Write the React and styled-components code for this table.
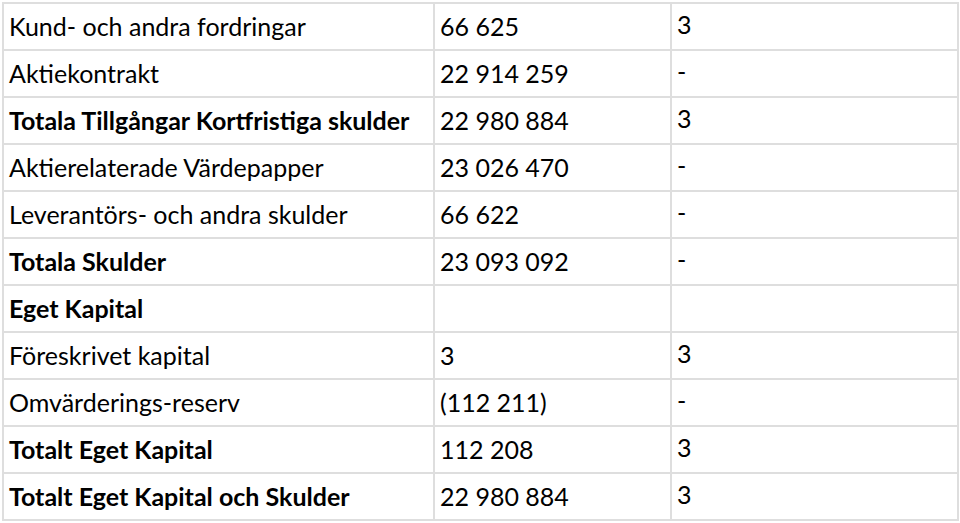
import React from 'react'
import styled, { createGlobalStyle } from 'styled-components'

const GlobalStyle = createGlobalStyle`
  body {
    margin: 0;
    background: #fff;
    font-family: Lato, "Open Sans", sans-serif;
    color: #000;
  }
`

const rows = [
  { label: 'Kund- och andra fordringar', value: '66 625', note: '3' },
  { label: 'Aktiekontrakt', value: '22 914 259', note: '-' },
  { label: 'Totala Tillgångar Kortfristiga skulder', value: '22 980 884', note: '3', bold: true },
  { label: 'Aktierelaterade Värdepapper', value: '23 026 470', note: '-' },
  { label: 'Leverantörs- och andra skulder', value: '66 622', note: '-' },
  { label: 'Totala Skulder', value: '23 093 092', note: '-', bold: true },
  { label: 'Eget Kapital', value: '', note: '', bold: true },
  { label: 'Föreskrivet kapital', value: '3', note: '3' },
  { label: 'Omvärderings-reserv', value: '(112 211)', note: '-' },
  { label: 'Totalt Eget Kapital', value: '112 208', note: '3', bold: true },
  { label: 'Totalt Eget Kapital och Skulder', value: '22 980 884', note: '3', bold: true },
]

export default function App() {
  return (
    <Page>
      <GlobalStyle />
      <Table>
        <colgroup>
          <col style={{ width: 431 }} />
          <col style={{ width: 237 }} />
          <col style={{ width: 287 }} />
        </colgroup>
        <tbody>
          {rows.map((r, i) => (
            <Row key={i}>
              <Label $bold={r.bold}>{r.label}</Label>
              <Value>{r.value}</Value>
              <Note>{r.note}</Note>
            </Row>
          ))}
        </tbody>
      </Table>
    </Page>
  )
}

const Page = styled.div`
  padding: 2px 0 0 2px;
`

const Table = styled.table`
  border-collapse: collapse;
  table-layout: fixed;
  width: 955px;
`

const Row = styled.tr`
  height: 47px;
`

const Cell = styled.td`
  border: 2px solid #dedede;
  padding: 0 0 0 5px;
  vertical-align: middle;
  white-space: nowrap;
  font-size: 25px;
  line-height: 1;
`

const Label = styled(Cell)`
  font-weight: ${(p) => (p.$bold ? 700 : 400)};
`

const Value = styled(Cell)``

const Note = styled(Cell)`
  padding-bottom: 4px;
`
